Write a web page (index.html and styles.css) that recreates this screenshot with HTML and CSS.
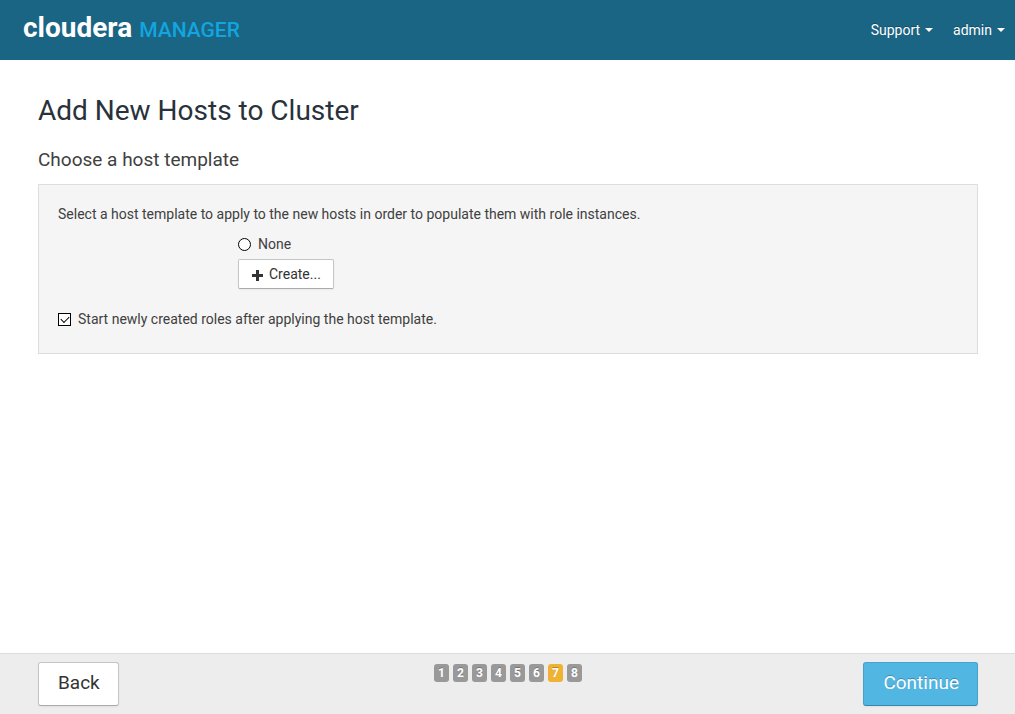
FILE: index.html
```html
<!DOCTYPE html>
<html lang="en">
<head>
<meta charset="utf-8">
<meta name="viewport" content="width=device-width, initial-scale=1">
<title>Add New Hosts to Cluster - Cloudera Manager</title>
<link rel="stylesheet" href="styles.css">
</head>
<body>
<header class="navbar">
  <a class="brand" href="#"><span class="brand-name">cloudera</span><span class="brand-product">MANAGER</span></a>
  <nav class="nav">
    <button class="nav-item" type="button">Support<span class="caret"></span></button>
    <button class="nav-item" type="button">admin<span class="caret"></span></button>
  </nav>
</header>
<main class="container">
  <h1 class="title">Add New Hosts to Cluster</h1>
  <h2 class="subtitle">Choose a host template</h2>
  <form class="panel">
    <p class="intro">Select a host template to apply to the new hosts in order to populate them with role instances.</p>
    <div class="options">
      <label class="choice"><input class="radio" type="radio" name="template">None</label>
      <button class="btn btn-create" type="button">
        <svg class="plus" viewBox="0 0 11 11" aria-hidden="true"><path fill="currentColor" d="M4 0h3v4h4v3H7v4H4V7H0V4h4z"/></svg>
        Create...
      </button>
    </div>
    <label class="choice"><input class="checkbox" type="checkbox" checked>Start newly created roles after applying the host template.</label>
  </form>
</main>
<footer class="footer">
  <div class="container footer-row">
    <button class="btn btn-large" type="button">Back</button>
    <ol class="steps">
      <li class="step">1</li>
      <li class="step">2</li>
      <li class="step">3</li>
      <li class="step">4</li>
      <li class="step">5</li>
      <li class="step">6</li>
      <li class="step step-current">7</li>
      <li class="step">8</li>
    </ol>
    <button class="btn btn-large btn-primary" type="button">Continue</button>
  </div>
</footer>
</body>
</html>
```
FILE: styles.css
```css
* { box-sizing: border-box; }

body {
  display: flex;
  flex-direction: column;
  min-height: 100vh;
  margin: 0;
  background: #fff;
  color: #404040;
  font-family: Roboto, "Liberation Sans", sans-serif;
  font-size: 14px;
  line-height: 20px;
}

button { font: inherit; cursor: pointer; }

.navbar {
  display: flex;
  align-items: center;
  justify-content: space-between;
  height: 60px;
  padding: 0 10px 0 23px;
  background: #1a6484;
}

.brand {
  display: flex;
  align-items: baseline;
  gap: 7px;
  padding-bottom: 3px;
  line-height: 28px;
  text-decoration: none;
}

.brand-name { color: #fff; font-size: 28px; font-weight: 700; }
.brand-product { color: #12a5df; font-size: 21px; font-weight: 500; }

.nav { display: flex; gap: 20px; }

.nav-item {
  display: flex;
  align-items: center;
  gap: 5px;
  padding: 0;
  border: 0;
  background: none;
  color: #fff;
  text-shadow: 0 -1px 0 rgba(0, 0, 0, .25);
}

.caret {
  border-top: 4px solid #fff;
  border-right: 4px solid transparent;
  border-left: 4px solid transparent;
}

.container { width: 100%; max-width: 1015px; margin: 0 auto; padding: 0 37px 0 38px; }

main.container { flex: 1; }

.title {
  margin: 31px 0 9px;
  color: #29323b;
  font-size: 28px;
  font-weight: 400;
  line-height: 40px;
}

.subtitle {
  margin: 0 0 4px;
  font-size: 19px;
  font-weight: 400;
  line-height: 40px;
}

.panel {
  padding: 19px 19px 24px;
  border: 1px solid #ddd;
  background: #f5f5f5;
}

.intro { margin: 0 0 10px; }

.options {
  display: flex;
  flex-direction: column;
  align-items: flex-start;
  gap: 5px;
  margin: 0 0 20px 180px;
}

.choice { display: flex; align-items: center; gap: 7px; }

.radio, .checkbox {
  appearance: none;
  width: 13px;
  height: 13px;
  margin: 0;
  border: 1px solid #000;
  background: #fff;
}

.radio { border-radius: 50%; }
.radio:checked { box-shadow: inset 0 0 0 3px #fff; background: #000; }

.checkbox { display: grid; place-items: center; }
.checkbox:checked::before {
  content: "";
  width: 7px;
  height: 4px;
  margin-bottom: 2px;
  border-bottom: 1px solid #000;
  border-left: 1px solid #000;
  transform: rotate(-45deg);
}

.btn {
  display: flex;
  align-items: center;
  border: 1px solid #c5c5c5;
  border-bottom-color: #aaa;
  border-radius: 2px;
  background: #fff;
  box-shadow: 0 1px 2px rgba(0, 0, 0, .05);
  color: #333;
}

.btn-create { gap: 6px; padding: 4px 12px 4px 13px; }
.plus { width: 11px; height: 11px; margin-top: 2px; }

.btn-large {
  padding: 10px 18px 12px 19px;
  border-radius: 3px;
  font-size: 19px;
}

.btn-primary {
  border-color: #46a2ca;
  border-bottom-color: #3487ad;
  background: #52b6e3;
  color: #fff;
  text-shadow: 0 -1px 0 rgba(0, 0, 0, .25);
}

.footer { padding: 8px 0; border-top: 1px solid #ddd; background: #ededed; }

.footer-row {
  display: grid;
  grid-template-columns: 1fr auto 1fr;
  align-items: start;
}

.footer-row .btn:first-child { justify-self: start; }
.footer-row .btn:last-child { justify-self: end; }

.steps {
  display: flex;
  gap: 4px;
  margin: 2px 0 0;
  padding: 0;
  list-style: none;
}

.step {
  width: 15px;
  border-radius: 3px;
  background: #999;
  color: #fff;
  font-size: 12px;
  font-weight: 700;
  line-height: 18px;
  text-align: center;
  text-shadow: 0 -1px 0 rgba(0, 0, 0, .25);
}

.step-current { background: #f0b232; }
```
